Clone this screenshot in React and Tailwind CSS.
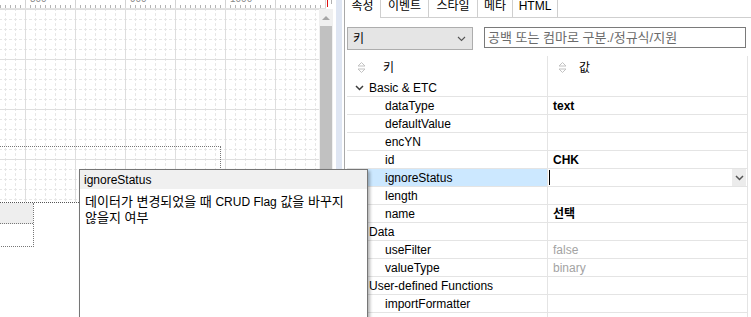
import React from 'react';

const CW = 319;
const CH = 308;

// canvas grid: minor dashed crosses every 10px, solid major lines every 50px
function CanvasGrid() {
  const minorX = [];
  for (let x = 5; x < CW; x += 10) if ((x - 25) % 50 !== 0) minorX.push(x);
  const minorY = [];
  for (let y = 10; y < CH; y += 10) if (y % 50 !== 0) minorY.push(y);
  const majorX = [];
  for (let x = 25; x < CW; x += 50) majorX.push(x);
  const majorY = [];
  for (let y = 0; y < CH; y += 50) majorY.push(y);

  return (
    <svg width={CW} height={CH} className="absolute left-0 top-0" shapeRendering="crispEdges">
      {minorX.map((x) => (
        <line key={'mx' + x} x1={x + 0.5} y1={0} x2={x + 0.5} y2={CH} stroke="#e7e7e7" strokeDasharray="3 2" strokeDashoffset="1" />
      ))}
      {minorY.map((y) => (
        <line key={'my' + y} x1={0} y1={y + 0.5} x2={CW} y2={y + 0.5} stroke="#e7e7e7" strokeDasharray="3 2" strokeDashoffset="1" />
      ))}
      {majorX.map((x) => (
        <line key={'Mx' + x} x1={x + 0.5} y1={0} x2={x + 0.5} y2={CH} stroke="#dedede" />
      ))}
      {majorY.map((y) => (
        <line key={'My' + y} x1={0} y1={y + 0.5} x2={CW} y2={y + 0.5} stroke="#dedede" />
      ))}
    </svg>
  );
}

function Ruler() {
  const ticks = [];
  for (let x = 0; x < 326; x += 5) ticks.push(x);
  return (
    <svg width="333" height="9" className="block shrink-0" shapeRendering="crispEdges">
      <rect x="0" y="0" width="333" height="9" fill="#fff" />
      {ticks.map((x) =>
        (x - 25) % 50 === 0 ? (
          <line key={x} x1={x + 0.5} y1={0} x2={x + 0.5} y2={9} stroke="#d4d4d4" />
        ) : (
          <line key={x} x1={x + 0.5} y1={5} x2={x + 0.5} y2={8} stroke="#b4b4b4" />
        )
      )}
      <line x1="0" y1="8.5" x2="326" y2="8.5" stroke="#e2e2e2" />
      <text x="30" y="2" fontSize="10" fill="#8a8a8a" fontFamily="Liberation Sans, sans-serif">800</text>
      <text x="130" y="2" fontSize="10" fill="#8a8a8a" fontFamily="Liberation Sans, sans-serif">900</text>
      <text x="230" y="2" fontSize="10" fill="#8a8a8a" fontFamily="Liberation Sans, sans-serif">1000</text>
      <line x1="327.5" y1="0" x2="327.5" y2="7" stroke="#e01010" />
      <line x1="331.5" y1="0" x2="331.5" y2="4" stroke="#b0b0b0" />
    </svg>
  );
}

const SortIcon = () => (
  <svg width="9" height="13" viewBox="0 0 9 13" className="shrink-0">
    <path d="M1 5 L4.5 1.5 L8 5 Z" fill="none" stroke="#c2c2c2" />
    <path d="M1 8 L4.5 11.5 L8 8 Z" fill="none" stroke="#c2c2c2" />
  </svg>
);

const Chevron = ({ color = '#3c3c3c', width = 1.5 }) => (
  <svg width="9" height="6" viewBox="0 0 9 6" className="shrink-0">
    <path d="M1 1 L4.5 4.5 L8 1" fill="none" stroke={color} strokeWidth={width} />
  </svg>
);

const rows = [
  { cat: 'Basic & ETC' },
  { k: 'dataType', v: 'text', bold: true },
  { k: 'defaultValue' },
  { k: 'encYN' },
  { k: 'id', v: 'CHK', bold: true },
  { k: 'ignoreStatus', selected: true },
  { k: 'length' },
  { k: 'name', v: '선택', bold: true },
  { cat: 'Data' },
  { k: 'useFilter', v: 'false', dim: true },
  { k: 'valueType', v: 'binary', dim: true },
  { cat: 'User-defined Functions' },
  { k: 'importFormatter' },
  { k: '' },
];

const tabs = [
  { label: '속성', w: 'w-[36px]', active: true },
  { label: '이벤트', w: 'w-[48px]' },
  { label: '스타일', w: 'w-[49px]' },
  { label: '메타', w: 'w-[35px]' },
  { label: 'HTML', w: 'w-[45px]' },
];

function PropRow({ row }) {
  if (row.cat) {
    return (
      <div className="flex h-[18px] border-b border-[#e4e4e4]">
        <div className="w-[200px] flex items-center pl-[8px]">
          <Chevron />
          <span className="ml-[5px] whitespace-nowrap">{row.cat}</span>
        </div>
        <div className="flex-1 border-l border-[#e4e4e4]" />
      </div>
    );
  }
  return (
    <div className="flex h-[18px] border-b border-[#e4e4e4]">
      <div className={`w-[200px] flex items-center pl-[38px] ${row.selected ? 'bg-[#cce8ff]' : ''}`}>
        <span className="whitespace-nowrap">{row.k}</span>
      </div>
      {row.selected ? (
        <div className="flex-1 border-l border-[#e4e4e4] relative flex justify-end bg-white">
          <div className="absolute left-[1px] top-[1px] h-[15px] w-px bg-black" />
          <div className="w-[14px] mr-[1px] bg-[#ececec] flex items-center justify-center">
            <Chevron color="#555" />
          </div>
        </div>
      ) : (
        <div
          className={`flex-1 border-l border-[#e4e4e4] flex items-center pl-[5px] ${row.bold ? 'font-bold' : ''} ${
            row.dim ? 'text-[#a3a3a3]' : ''
          }`}
        >
          {row.v}
        </div>
      )}
    </div>
  );
}

export default function App() {
  return (
    <div className="relative w-[751px] h-[317px] overflow-hidden flex bg-white text-[12px] text-black font-['Liberation_Sans','Noto_Sans_CJK_KR',sans-serif]">
      {/* design canvas */}
      <div className="w-[333px] h-full flex flex-col shrink-0">
        <Ruler />
        <div className="flex flex-1 min-h-0">
          <div className="relative w-[319px] h-full overflow-hidden bg-white">
            <CanvasGrid />
            {/* selected component outline */}
            <div className="absolute left-[-1px] top-[137px] w-[222px] h-[120px] border border-dotted border-[#777]" />
            {/* form component with grid */}
            <div className="absolute left-[-1px] top-[193px] w-[400px] h-[140px] bg-white border-t border-dotted border-[#555]">
              <div className="w-[35px] border-r border-b border-dotted border-[#777]">
                <div className="h-[21px] bg-[#eeeeee] border-b border-dotted border-[#777]" />
                <div className="h-[22px]" />
              </div>
            </div>
          </div>
          {/* scrollbar */}
          <div className="w-[14px] h-full bg-[#f0f0f0] flex flex-col">
            <div className="h-[17px] flex items-center justify-center">
              <svg width="8" height="5" viewBox="0 0 8 5">
                <path d="M0 5 L4 1 L8 5 Z" fill="#a6a6a6" />
              </svg>
            </div>
            <div className="flex-1 ml-[1px] w-[12px] bg-[#c1c1c1]" />
          </div>
        </div>
      </div>

      {/* splitter */}
      <div className="w-[11px] h-full flex shrink-0">
        <div className="w-[3px] bg-white" />
        <div className="w-[6px] bg-[#dfe6f3]" />
        <div className="w-[2px] bg-white" />
      </div>

      {/* property panel */}
      <div className="flex-1 h-full border-l border-[#a9a9a9] flex flex-col bg-white">
        <div className="flex h-[18px] shrink-0">
          {tabs.map((t) => (
            <div
              key={t.label}
              className={`${t.w} shrink-0 flex justify-center border-r border-[#cfcfcf] leading-[12px] ${
                t.active ? '' : 'border-b'
              }`}
            >
              <span className="whitespace-nowrap">{t.label}</span>
            </div>
          ))}
          <div className="flex-1 border-b border-[#cfcfcf]" />
        </div>

        <div className="flex-1 min-h-0 pl-[2px] pt-[9px]">
          <div className="flex items-start">
            <div className="w-[126px] h-[23px] bg-[#e5e5e5] border border-[#adadad] flex items-center pl-[5px] pr-[6px]">
              <span className="flex-1">키</span>
              <Chevron color="#555" width={1.1} />
            </div>
            <div className="ml-[11px] w-[262px] h-[21px] border border-[#7a7a7a] flex items-center pl-[3px] text-[13px] text-[#6b6b6b] whitespace-nowrap">
              공백 또는 컴마로 구분./정규식/지원
            </div>
          </div>

          <div className="mt-[6px] w-[401px] border-r border-[#e4e4e4]">
            <div className="flex h-[23px]">
              <div className="w-[200px] flex items-center pl-[10px]">
                <SortIcon />
                <span className="ml-[17px]">키</span>
              </div>
              <div className="flex-1 border-l border-[#e4e4e4] flex items-center pl-[10px]">
                <SortIcon />
                <span className="ml-[12px]">값</span>
              </div>
            </div>
            {rows.map((r, i) => (
              <PropRow key={i} row={r} />
            ))}
          </div>
        </div>
      </div>

      {/* description tooltip */}
      <div className="absolute left-[79px] top-[169px] w-[289px] h-[160px] bg-white border border-[#767676] shadow-[2px_2px_3px_rgba(0,0,0,0.3)]">
        <div className="h-[19px] bg-[#f0f0f0] flex items-center pl-[4px]">ignoreStatus</div>
        <div className="pt-[5px] pl-[5px] leading-[16px] whitespace-nowrap">
          <span className="text-[13px]">데이터가 변경되었을 때 </span>
          CRUD Flag
          <span className="text-[13px]"> 값을 바꾸지</span>
          <br />
          <span className="text-[13px]">않을지 여부</span>
        </div>
      </div>
    </div>
  );
}
